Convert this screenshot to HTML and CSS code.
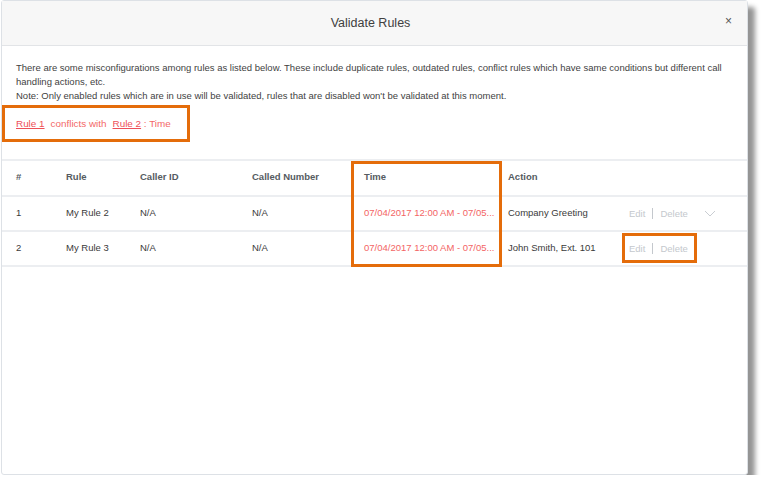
FILE: index.html
```html
<!DOCTYPE html>
<html>
<head>
<meta charset="utf-8">
<link rel="stylesheet" href="styles.css">
</head>
<body>
<div class="dialog">
  <div class="dialog-header">
    <span class="dialog-title">Validate Rules</span>
    <span class="close">&#215;</span>
  </div>
  <div class="dialog-body">
    <p class="desc">There are some misconfigurations among rules as listed below. These include duplicate rules, outdated rules, conflict rules which have same conditions but different call handling actions, etc.<br>Note: Only enabled rules which are in use will be validated, rules that are disabled won't be validated at this moment.</p>
    <p class="conflict"><a class="rule-link">Rule 1</a><span class="gap">conflicts with</span><a class="rule-link">Rule 2</a> : Time</p>
  </div>
  <div class="table">
    <div class="row head">
      <div>#</div><div>Rule</div><div>Caller ID</div><div>Called Number</div><div>Time</div><div>Action</div><div></div>
    </div>
    <div class="row">
      <div>1</div><div>My Rule 2</div><div>N/A</div><div>N/A</div><div class="time">07/04/2017 12:00 AM - 07/05...</div><div>Company Greeting</div>
      <div class="ops"><span>Edit</span><i class="sep"></i><span>Delete</span><svg class="chev" width="12" height="7" viewBox="0 0 12 7"><path d="M1 1 L6 6 L11 1" fill="none" stroke="#c9cdd2" stroke-width="1"/></svg></div>
    </div>
    <div class="row">
      <div>2</div><div>My Rule 3</div><div>N/A</div><div>N/A</div><div class="time">07/04/2017 12:00 AM - 07/05...</div><div>John Smith, Ext. 101</div>
      <div class="ops"><span>Edit</span><i class="sep"></i><span>Delete</span></div>
    </div>
  </div>
  <div class="mark mark-conflict"></div>
  <div class="mark mark-time"></div>
  <div class="mark mark-ops"></div>
</div>
</body>
</html>
```
FILE: styles.css
```css
html, body {
  margin: 0;
  padding: 0;
  background: #ffffff;
}
body {
  font-family: "Liberation Sans", Arial, sans-serif;
  color: #3a3a3a;
}
.dialog {
  position: relative;
  margin: 0 0 0 1px;
  width: 745px;
  height: 473px;
  border: 1px solid #dde1e6;
  border-radius: 3px;
  background: #fff;
  box-shadow: 7px 7px 5px rgba(0, 0, 0, 0.42);
}
.dialog-header {
  height: 44px;
  background: #f7f7f7;
  border-bottom: 1px solid #e2e4e7;
  display: flex;
  align-items: center;
  justify-content: center;
  padding-right: 8px;
  position: relative;
}
.dialog-title {
  font-size: 12.5px;
  color: #404040;
}
.close {
  position: absolute;
  right: 15px;
  top: 13px;
  font-size: 12px;
  color: #555;
}
.dialog-body {
  padding: 15px 14px 0 14px;
}
.desc {
  margin: 0;
  font-size: 9.5px;
  line-height: 14px;
  color: #3f3f3f;
}
.conflict {
  margin: 14px 0 0 0;
  font-size: 9.9px;
  line-height: 14px;
  color: #f36767;
  height: 14px;
}
.rule-link {
  color: #ee4f58;
  text-decoration: underline;
}
.gap {
  margin: 0 6px;
}
.table {
  margin-top: 28px;
  border-top: 2px solid #eceef1;
}
.row {
  display: grid;
  grid-template-columns: 50px 74px 112px 112px 144px 121px 1fr;
  padding: 0 0 3px 14px;
  height: 30px;
  align-items: center;
  border-bottom: 2px solid #eceef1;
  font-size: 9.5px;
  color: #3a3a3a;
}
.row.head {
  font-weight: bold;
  color: #555b61;
  height: 31px;
}
.time {
  color: #f36464;
}
.ops {
  display: flex;
  align-items: center;
  color: #c4c8cd;
  padding-top: 3px;
}
.sep {
  display: inline-block;
  width: 1px;
  height: 11px;
  background: #c4c8cd;
  margin: 0 7px;
}
.chev {
  margin-left: 16px;
}
.mark {
  position: absolute;
  border: 3px solid #e46c0a;
}
.mark-conflict {
  left: 0;
  top: 104px;
  width: 182px;
  height: 31px;
}
.mark-time {
  left: 349px;
  top: 160px;
  width: 145px;
  height: 100px;
}
.mark-ops {
  left: 620px;
  top: 232px;
  width: 69px;
  height: 24px;
}
```
